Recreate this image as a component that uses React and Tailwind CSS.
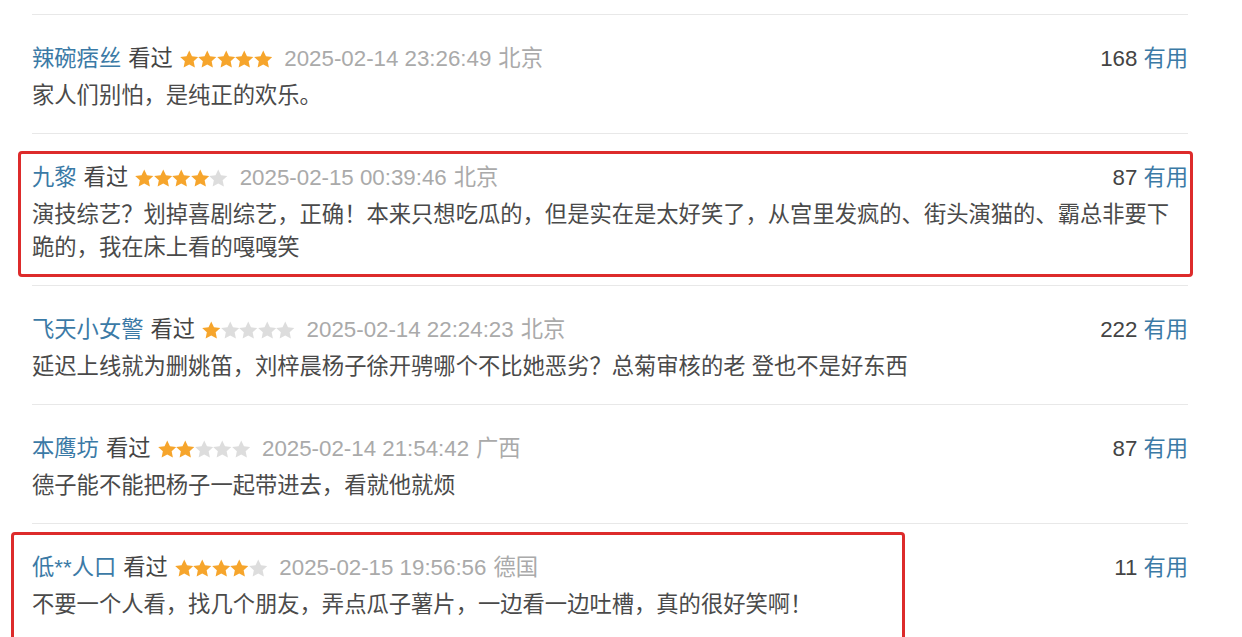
import React from 'react'

const FONT = "font-['Liberation_Sans','Noto_Sans_CJK_SC',sans-serif]"

const comments = [
  { user: '辣碗痞丝', stars: 5, time: '2025-02-14 23:26:49', loc: '北京', votes: 168, text: '家人们别怕，是纯正的欢乐。' },
  {
    user: '九黎', stars: 4, time: '2025-02-15 00:39:46', loc: '北京', votes: 87,
    text: '演技综艺？划掉喜剧综艺，正确！本来只想吃瓜的，但是实在是太好笑了，从宫里发疯的、街头演猫的、霸总非要下跪的，我在床上看的嘎嘎笑',
    mark: 'top-[17px] -left-[14px] w-[1175px] h-[126px]',
  },
  { user: '飞天小女警', stars: 1, time: '2025-02-14 22:24:23', loc: '北京', votes: 222, text: '延迟上线就为删姚笛，刘梓晨杨子徐开骋哪个不比她恶劣？总菊审核的老 登也不是好东西' },
  { user: '本鹰坊', stars: 2, time: '2025-02-14 21:54:42', loc: '广西', votes: 87, text: '德子能不能把杨子一起带进去，看就他就烦' },
  {
    user: '低**人口', stars: 4, time: '2025-02-15 19:56:56', loc: '德国', votes: 11,
    text: '不要一个人看，找几个朋友，弄点瓜子薯片，一边看一边吐槽，真的很好笑啊！',
    mark: 'top-[8px] -left-[21px] w-[894px] h-[200px]',
  },
]

function Star({ on }) {
  return (
    <svg width="18.5" height="18.5" viewBox="1.5 1.3 21 21" className="shrink-0">
      <path
        d="M12 1.8l3.1 6.6 7.2.9-5.3 4.9 1.4 7.1L12 17.8l-6.4 3.5 1.4-7.1-5.3-4.9 7.2-.9z"
        fill={on ? '#f6a52c' : '#dddddd'}
      />
    </svg>
  )
}

function Comment({ c }) {
  return (
    <div className="relative border-t border-[#e8e8e8] pt-[26px] pb-[21px]">
      <div className="flex items-center justify-between h-[36px] leading-[36px]">
        <div className="flex items-center whitespace-nowrap">
          <span className="text-[#3b7aa6]">{c.user}</span>
          <span className="ml-[7px] text-[#444]">看过</span>
          <span className="ml-[7px] flex items-center">
            {[0, 1, 2, 3, 4].map(i => <Star key={i} on={i < c.stars} />)}
          </span>
          <span className="ml-[12px] text-[#aaa]">{c.time}</span>
          <span className="ml-[7px] text-[#aaa]">{c.loc}</span>
        </div>
        <div className="whitespace-nowrap">
          <span className="text-[#444]">{c.votes}</span>
          <span className="ml-[6px] text-[#3b7aa6]">有用</span>
        </div>
      </div>
      <p className="mt-[2px] leading-[33px] text-[#4a4a4a]">{c.text}</p>
      {c.mark && (
        <div className={`pointer-events-none absolute ${c.mark} border-[3px] border-[#dd2b2b] rounded-[4px]`} />
      )}
    </div>
  )
}

export default function App() {
  return (
    <div className={`w-[1242px] h-[637px] overflow-hidden bg-white ${FONT} text-[22.3px]`}>
      <div className="ml-[32px] w-[1156px] pt-[14px]">
        {comments.map((c, i) => <Comment key={i} c={c} />)}
      </div>
    </div>
  )
}
